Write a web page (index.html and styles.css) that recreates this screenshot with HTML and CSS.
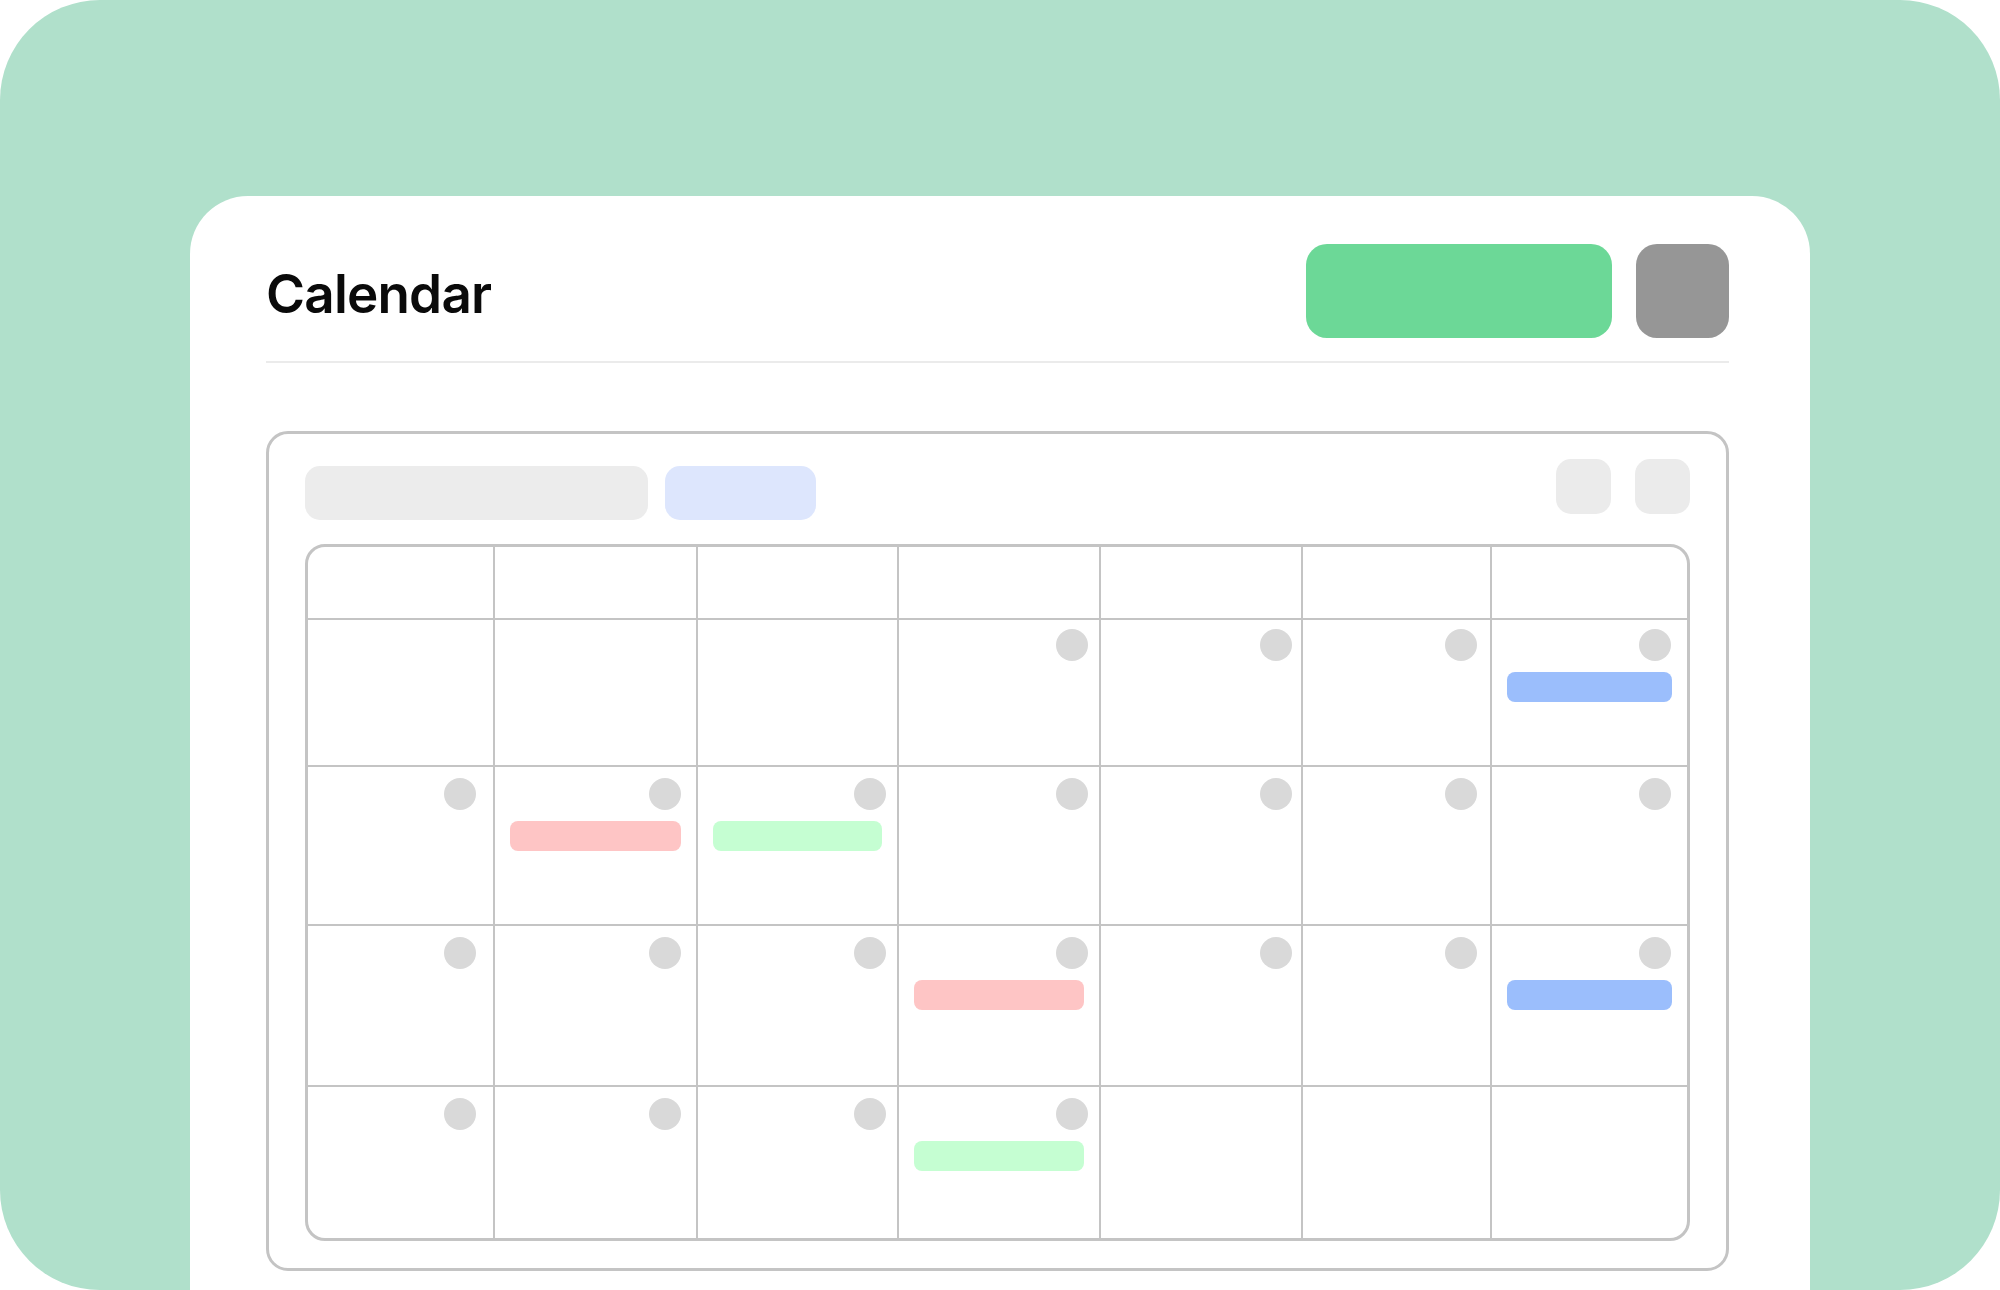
FILE: index.html
```html
<!DOCTYPE html>
<html lang="en">
<head>
<meta charset="utf-8">
<title>Calendar</title>
<link rel="stylesheet" href="styles.css">
</head>
<body>
<div class="stage">
  <div class="card">
    <header class="card-head">
      <h1 class="title">Calendar</h1>
      <div class="head-actions">
        <div class="btn-primary"></div>
        <div class="btn-icon"></div>
      </div>
    </header>
    <div class="divider"></div>

    <section class="panel">
      <div class="toolbar">
        <div class="tool-left">
          <div class="pill pill-gray"></div>
          <div class="pill pill-blue"></div>
        </div>
        <div class="tool-right">
          <div class="sq"></div>
          <div class="sq"></div>
        </div>
      </div>

      <div class="month">
        <div class="cell"></div><div class="cell"></div><div class="cell"></div><div class="cell"></div><div class="cell"></div><div class="cell"></div><div class="cell"></div>

        <div class="cell day first"></div>
        <div class="cell day first"></div>
        <div class="cell day first"></div>
        <div class="cell day first"><span class="dot"></span></div>
        <div class="cell day first"><span class="dot"></span></div>
        <div class="cell day first"><span class="dot"></span></div>
        <div class="cell day first"><span class="dot"></span><span class="ev ev-blue"></span></div>

        <div class="cell day"><span class="dot"></span></div>
        <div class="cell day"><span class="dot"></span><span class="ev ev-red"></span></div>
        <div class="cell day"><span class="dot"></span><span class="ev ev-green"></span></div>
        <div class="cell day"><span class="dot"></span></div>
        <div class="cell day"><span class="dot"></span></div>
        <div class="cell day"><span class="dot"></span></div>
        <div class="cell day"><span class="dot"></span></div>

        <div class="cell day"><span class="dot"></span></div>
        <div class="cell day"><span class="dot"></span></div>
        <div class="cell day"><span class="dot"></span></div>
        <div class="cell day"><span class="dot"></span><span class="ev ev-red"></span></div>
        <div class="cell day"><span class="dot"></span></div>
        <div class="cell day"><span class="dot"></span></div>
        <div class="cell day"><span class="dot"></span><span class="ev ev-blue"></span></div>

        <div class="cell day"><span class="dot"></span></div>
        <div class="cell day"><span class="dot"></span></div>
        <div class="cell day"><span class="dot"></span></div>
        <div class="cell day"><span class="dot"></span><span class="ev ev-green"></span></div>
        <div class="cell day"></div>
        <div class="cell day"></div>
        <div class="cell day"></div>
      </div>
    </section>
  </div>
</div>
</body>
</html>
```

FILE: styles.css
```css
* { box-sizing: border-box; }

html, body {
  margin: 0;
  padding: 0;
  background: #ffffff;
}

body {
  width: 2000px;
  height: 1290px;
  overflow: hidden;
  font-family: Inter, "Noto Sans", "Liberation Sans", sans-serif;
}

.stage {
  width: 2000px;
  height: 1290px;
  background: #b0e0cb;
  border-radius: 100px;
  overflow: hidden;
  padding-top: 196px;
  padding-left: 190px;
}

.card {
  width: 1620px;
  height: 1200px;
  background: #ffffff;
  border-radius: 58px;
  padding: 48px 81px 0 76px;
}

.card-head {
  display: flex;
  align-items: center;
  justify-content: space-between;
  height: 94px;
}

.title {
  margin: 0;
  font-size: 53px;
  font-weight: 600;
  letter-spacing: -0.8px;
  color: #0a0a0a;
  line-height: 1;
  padding-top: 6px;
}

.head-actions {
  display: flex;
  gap: 24px;
}

.btn-primary {
  width: 306px;
  height: 94px;
  border-radius: 21px;
  background: #6cd897;
}

.btn-icon {
  width: 93px;
  height: 94px;
  border-radius: 21px;
  background: #969696;
}

.divider {
  height: 2px;
  background: #ebebeb;
  margin-top: 23px;
}

.panel {
  margin-top: 68px;
  height: 840px;
  border: 3px solid #c4c4c4;
  border-radius: 22px;
  padding: 0 36px 0 36px;
}

.toolbar {
  display: flex;
  justify-content: space-between;
  align-items: flex-start;
  height: 110px;
}

.tool-left {
  display: flex;
  gap: 17px;
  margin-top: 32px;
}

.pill {
  height: 54px;
  border-radius: 15px;
}

.pill-gray {
  width: 343px;
  background: #ececec;
}

.pill-blue {
  width: 151px;
  background: #dde6fd;
}

.tool-right {
  display: flex;
  gap: 24px;
  margin-top: 25px;
}

.sq {
  width: 55px;
  height: 55px;
  border-radius: 15px;
  background: #ebebeb;
}

.month {
  display: grid;
  grid-template-columns: 185px 201px 199px 200px 200px 187px 195px;
  grid-template-rows: 71px 145px 157px 159px 151px;
  gap: 2px;
  background: #c4c4c4;
  border: 3px solid #c4c4c4;
  border-radius: 20px;
  overflow: hidden;
  width: 1385px;
  height: 697px;
}

.cell {
  background: #ffffff;
}

.day {
  display: flex;
  flex-direction: column;
  align-items: flex-end;
  padding: 11px 15px 0 15px;
}

.day.first {
  padding-top: 9px;
}

.dot {
  display: block;
  width: 32px;
  height: 32px;
  border-radius: 50%;
  background: #d9d9d9;
}

.day:nth-child(7n+1) .dot { margin-right: 2px; }
.day:nth-child(7n+3) .dot { margin-right: -4px; }
.day:nth-child(7n+4) .dot { margin-right: -4px; }
.day:nth-child(7n+5) .dot { margin-right: -6px; }
.day:nth-child(7n+6) .dot { margin-right: -2px; }
.day:nth-child(7n+7) .dot { margin-right: 1px; }

.ev {
  display: block;
  align-self: stretch;
  height: 30px;
  margin-top: 11px;
  border-radius: 8px;
}

.ev-blue { background: #9bbefc; }
.ev-red { background: #fec5c5; }
.ev-green { background: #c5fed2; }
```
